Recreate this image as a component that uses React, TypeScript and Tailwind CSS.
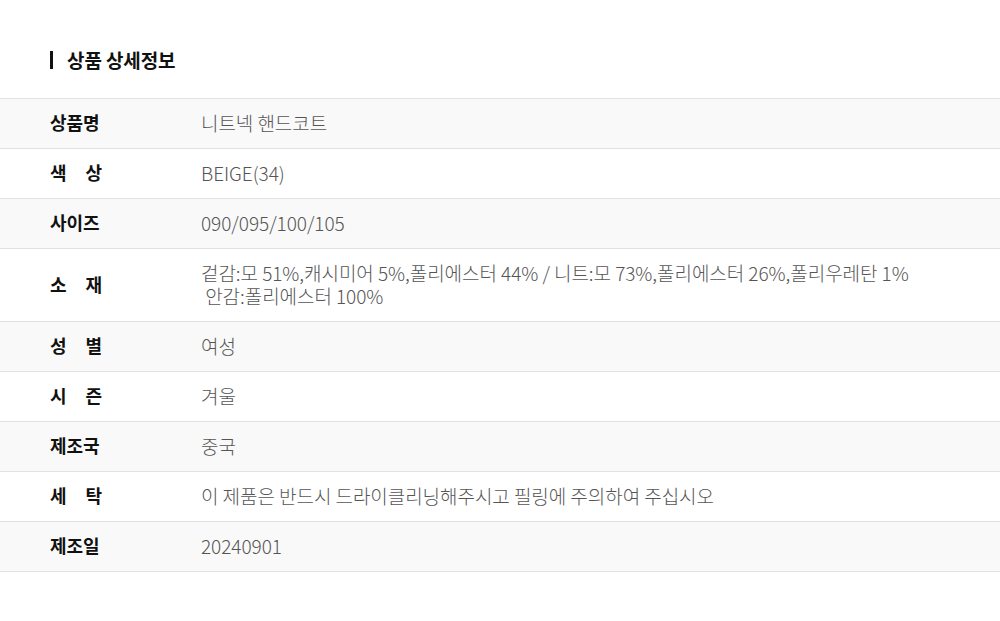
const rows: { label: string[]; value: string[] }[] = [
  { label: ['상품명'], value: ['니트넥 핸드코트'] },
  { label: ['색', '상'], value: ['BEIGE(34)'] },
  { label: ['사이즈'], value: ['090/095/100/105'] },
  {
    label: ['소', '재'],
    value: [
      '겉감:모 51%,캐시미어 5%,폴리에스터 44% / 니트:모 73%,폴리에스터 26%,폴리우레탄 1%',
      '\u00a0안감:폴리에스터 100%',
    ],
  },
  { label: ['성', '별'], value: ['여성'] },
  { label: ['시', '즌'], value: ['겨울'] },
  { label: ['제조국'], value: ['중국'] },
  { label: ['세', '탁'], value: ['이 제품은 반드시 드라이클리닝해주시고 필링에 주의하여 주십시오'] },
  { label: ['제조일'], value: ['20240901'] },
];

export default function App() {
  return (
    <div
      className="w-[1000px] min-h-[621px] bg-white pt-[49px]"
      style={{ fontFamily: '"Noto Sans CJK KR", "Noto Sans", sans-serif' }}
    >
      {/* Title */}
      <div className="flex items-center gap-[14px] pl-[50px] h-[22px]">
        <div className="w-[3px] h-[18px] bg-[#111]" />
        <h2 className="text-[19px] font-bold text-[#111] tracking-[-0.1px]">상품 상세정보</h2>
      </div>

      {/* Table */}
      <div className="mt-[27px] border-t border-[#e2e2e2]">
        {rows.map((row, i) => (
          <div
            key={i}
            className={`flex border-b border-[#e2e2e2] pt-[12px] pb-[14px] ${i % 2 === 0 ? 'bg-[#f9f9f9]' : 'bg-white'}`}
          >
            <div className="w-[201px] shrink-0 pl-[50px] flex items-center">
              <div className="w-[52px] flex justify-between text-[18px] font-bold text-[#111] leading-[23px]">
                {row.label.map((c, j) => (
                  <span key={j}>{c}</span>
                ))}
              </div>
            </div>
            <div className="text-[19px] font-light text-[#555] leading-[23px] tracking-[-0.05px]">
              {row.value.map((v, j) => (
                <div key={j}>{v}</div>
              ))}
            </div>
          </div>
        ))}
      </div>
    </div>
  );
}
